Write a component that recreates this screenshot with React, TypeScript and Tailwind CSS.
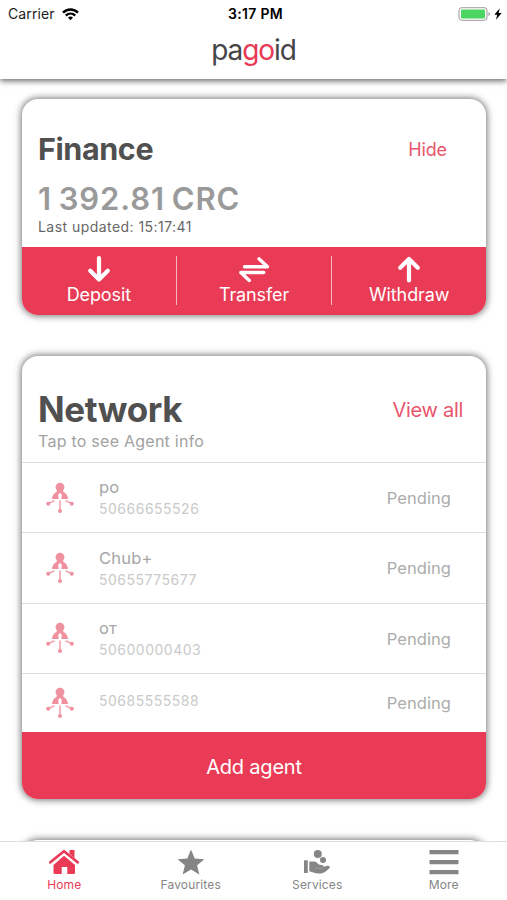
import type { ReactNode } from "react";

type Agent = {
  name?: string;
  phone: string;
};

const agents: Agent[] = [
  { name: "po", phone: "50666655526" },
  { name: "Chub+", phone: "50655775677" },
  { name: "от", phone: "50600000403" },
  { phone: "50685555588" },
];

function StatusBar() {
  return (
    <div className="flex h-7 items-center justify-between pl-2 pr-[5px] text-black">
      <div className="flex w-[200px] items-center gap-[7px]">
        <span className="text-[14px] leading-7 tracking-[0.1px] text-[#222]">Carrier</span>
        <svg width="17" height="13" viewBox="0 0 17 13" fill="none" stroke="currentColor" strokeWidth="2.4">
          <path d="M1 4.7C5.2.4 11.8.4 16 4.7" />
          <path d="M3.8 7.6C6.5 5 10.5 5 13.2 7.6" />
          <path d="M6 9.6Q8.5 7.6 11 9.6L8.5 12.3Z" fill="currentColor" stroke="none" />
        </svg>
      </div>
      <span className="pl-px text-[14px] font-semibold leading-7 tracking-[0.3px]">3:17 PM</span>
      <div className="flex w-[200px] items-center justify-end gap-[3px]">
        <svg width="33" height="14" viewBox="0 0 33 14">
          <rect x="1" y="0.7" width="28" height="12.6" rx="3.2" fill="#fff" stroke="#b0b0b0" strokeWidth="1.3" />
          <rect x="3" y="2.5" width="24" height="9" rx="1.2" fill="#4bd662" />
          <path d="M30.5 5v4q1.5-.6 1.5-2t-1.5-2z" fill="#999" />
        </svg>
        <svg width="8" height="12" viewBox="0 0 8 12" fill="currentColor">
          <path d="M5.8.3.3 6.8h2.9L2 11.7 7.7 5H4.6z" />
        </svg>
      </div>
    </div>
  );
}

function Header() {
  return (
    <header className="relative h-[79px] shrink-0 bg-white shadow-[0_2px_6px_0_rgba(0,0,0,0.6)]">
      <StatusBar />
      <div className="flex justify-center">
        <h1 className="text-[28px] leading-[45px] tracking-[-1.1px] text-[#454548]">
          pa<span className="text-[#e83a55]">go</span>id
        </h1>
      </div>
    </header>
  );
}

function ArrowDown() {
  return (
    <svg width="24" height="28" viewBox="0 0 24 28" fill="none" stroke="currentColor" strokeWidth="4.2" strokeLinecap="round" strokeLinejoin="round">
      <path d="M12 3v21M3.2 15.7l8.8 8.8 8.8-8.8" />
    </svg>
  );
}

function ArrowUp() {
  return (
    <svg width="24" height="28" viewBox="0 0 24 28" fill="none" stroke="currentColor" strokeWidth="4.2" strokeLinecap="round" strokeLinejoin="round">
      <path d="M12 25.5V4.5M3.2 12.8 12 4l8.8 8.8" />
    </svg>
  );
}

function TransferArrows() {
  return (
    <svg width="34" height="28" viewBox="0 0 34 28" fill="none" stroke="currentColor" strokeWidth="3.4" strokeLinecap="round" strokeLinejoin="round">
      <path d="M7.5 11.7h23L22 3.8" />
      <path d="M26.8 17.5H3.8L12.3 25.4" />
    </svg>
  );
}

function Action({ label, children }: { label: string; children: ReactNode }) {
  return (
    <button className="flex flex-1 flex-col items-center pt-2 text-white">
      {children}
      <span className="mt-px text-[18px] leading-[22px] tracking-[-0.1px]">{label}</span>
    </button>
  );
}

function Divider() {
  return <div className="mt-[9px] h-[49px] w-[1.5px] bg-[#f9b6bd]" />;
}

function FinanceCard() {
  return (
    <section className="h-[216px] shrink-0 overflow-hidden rounded-[16px] bg-white shadow-[0_0_7px_1px_rgba(0,0,0,0.55)]">
      <div className="h-[148px] px-4 pt-[30px]">
        <div className="flex items-center justify-between pr-[23px]">
          <h2 className="text-[30.5px] font-bold leading-[40px] tracking-[-0.4px] text-[#505050]">Finance</h2>
          <button className="pt-px text-[18px] tracking-[-0.1px] text-[#e8566c]">Hide</button>
        </div>
        <p className="mt-[10px] text-[31px] font-semibold leading-10 tracking-[0.9px] text-[#9a9a9a] [word-spacing:-2px]">1 392.81 CRC</p>
        <p className="-mt-[1px] text-[14px] leading-[18px] tracking-[0.45px] text-[#666]">Last updated: 15:17:41</p>
      </div>
      <div className="flex h-[68px] bg-[#e93b55]">
        <Action label="Deposit">
          <ArrowDown />
        </Action>
        <Divider />
        <Action label="Transfer">
          <TransferArrows />
        </Action>
        <Divider />
        <Action label="Withdraw">
          <ArrowUp />
        </Action>
      </div>
    </section>
  );
}

function AgentIcon() {
  return (
    <svg width="30" height="32" viewBox="0 0 30 32" fill="#f0919f">
      <circle cx="15" cy="5.2" r="4.4" />
      <path d="M12 8h6l.5 2C21 11.2 22.8 13.5 23 17H7c.2-3.5 2-5.8 4.5-7z" />
      <path d="M15 10.8l1.8 2.2-.5 4.2h-2.6l-.5-4.2z" fill="#fff" />
      <path d="M9.5 18.7 4 21.3M20.5 18.7l5.5 2.6M15 18.5v10" stroke="#f4a8b2" strokeWidth="1.7" fill="none" />
      <circle cx="3.2" cy="21.8" r="2" />
      <circle cx="26.8" cy="21.8" r="2" />
      <circle cx="15" cy="29" r="2" />
    </svg>
  );
}

function AgentRow({ agent }: { agent: Agent }) {
  return (
    <li className={`flex items-center border-t border-[#dedede] pl-[23px] pr-[35px] ${agent.name ? "h-[70.4px]" : "h-[58.8px]"}`}>
      <AgentIcon />
      <div className="ml-6 flex-1">
        {agent.name && <p className="text-[16.5px] leading-[22px] tracking-[0.2px] text-[#a6a6a6]">{agent.name}</p>}
        <p className={`text-[14px] leading-[21px] tracking-[0.5px] text-[#cacaca] ${agent.name ? "" : "-mt-[6px]"}`}>{agent.phone}</p>
      </div>
      <span className="pt-px text-[16.5px] tracking-[0.05px] text-[#acacac]">Pending</span>
    </li>
  );
}

function NetworkCard() {
  return (
    <section className="mt-[41px] h-[443px] shrink-0 overflow-hidden rounded-[16px] bg-white shadow-[0_0_7px_1px_rgba(0,0,0,0.55)]">
      <div className="h-[106px] px-4 pt-[31px]">
        <div className="flex items-center justify-between pr-[7px]">
          <h2 className="text-[35px] font-bold leading-[44px] tracking-[-0.4px] text-[#505050]">Network</h2>
          <button className="pt-[2px] text-[20px] tracking-[-0.3px] text-[#e8566c]">View all</button>
        </div>
        <p className="text-[16px] leading-[20px] tracking-[0.25px] text-[#a2a2a2]">Tap to see Agent info</p>
      </div>
      <ul>
        {agents.map((agent) => (
          <AgentRow key={agent.phone} agent={agent} />
        ))}
      </ul>
      <button className="h-[67px] w-full bg-[#e93b55] pt-[3px] text-[20px] tracking-[-0.2px] text-white">Add agent</button>
    </section>
  );
}

function HomeIcon() {
  return (
    <svg width="32" height="26" viewBox="0 0 32 26" fill="currentColor">
      <path d="M16 6.8 27 16v7.5q0 1.5-1.5 1.5h-6.2v-7h-5.6v7H7Q5.5 25 5.5 23.5V16z" />
      <path d="M2.3 13.5 16 2.2l13.7 11.3" fill="none" stroke="#fff" strokeWidth="4.6" />
      <path d="M21.5 1h5v8l-5-4.3z" />
      <path d="M2.3 13.3 16 2.2l13.7 11.1" fill="none" stroke="currentColor" strokeWidth="2.7" strokeLinecap="round" strokeLinejoin="round" />
    </svg>
  );
}

function StarIcon() {
  return (
    <svg width="28" height="26" viewBox="0 0 28 26" fill="currentColor">
      <path d="M14 .5l3.7 8.9 9.7.8-7.3 6.1 2.2 9.2L14 20.6l-8.3 4.9L7.9 16.3.6 10.2l9.7-.8z" />
    </svg>
  );
}

function ServicesIcon() {
  return (
    <svg width="28" height="26" viewBox="0 0 28 26" fill="currentColor">
      <circle cx="14.8" cy="5" r="4" />
      <circle cx="20" cy="11" r="3" />
      <rect x="1" y="11.3" width="3.8" height="12.7" rx=".6" />
      <path d="M6.3 12.5h4.5c3 0 3.7 2.5 6 3.3 2 .4 3.8.2 4 2 1.7-.2 3.4-1.3 5-.8 1.2.4 1.5 1.4.5 2.3-3 2.9-5.8 5.2-8.3 5.2-4 0-6.5-.4-8.5-1.3l-3.2-1z" />
      <path d="M12 19.3h7l1.5-1.2" fill="none" stroke="#fff" strokeOpacity=".3" strokeWidth=".7" />
    </svg>
  );
}

function MoreIcon() {
  return (
    <svg width="30" height="26" viewBox="0 0 30 26" fill="currentColor">
      <rect x=".5" y="1" width="29" height="4.2" rx=".6" />
      <rect x=".5" y="11" width="29" height="4.2" rx=".6" />
      <rect x=".5" y="21" width="29" height="4.2" rx=".6" />
    </svg>
  );
}

const tabs = [
  { label: "Home", icon: <HomeIcon />, active: true },
  { label: "Favourites", icon: <StarIcon /> },
  { label: "Services", icon: <ServicesIcon /> },
  { label: "More", icon: <MoreIcon /> },
];

function TabBar() {
  return (
    <nav className="relative flex h-[59px] shrink-0 border-t border-[#dedede] bg-white pl-px">
      {tabs.map((tab) => (
        <button key={tab.label} className={`flex flex-1 flex-col items-center pt-[7px] ${tab.active ? "text-[#e93b55]" : "text-[#858585]"}`}>
          {tab.icon}
          <span className="mt-[2px] text-[12px] leading-4 tracking-[0.15px]">{tab.label}</span>
        </button>
      ))}
    </nav>
  );
}

export default function App() {
  return (
    <div className="flex h-[900px] w-[507px] flex-col overflow-hidden bg-white font-['Inter',sans-serif]">
      <Header />
      <main className="flex min-h-0 flex-1 flex-col overflow-hidden pl-[22px] pr-[21px] pt-5">
        <FinanceCard />
        <NetworkCard />
        <section className="mt-[41px] h-[100px] shrink-0 rounded-[16px] bg-white shadow-[0_0_7px_1px_rgba(0,0,0,0.55)]" />
      </main>
      <TabBar />
    </div>
  );
}
